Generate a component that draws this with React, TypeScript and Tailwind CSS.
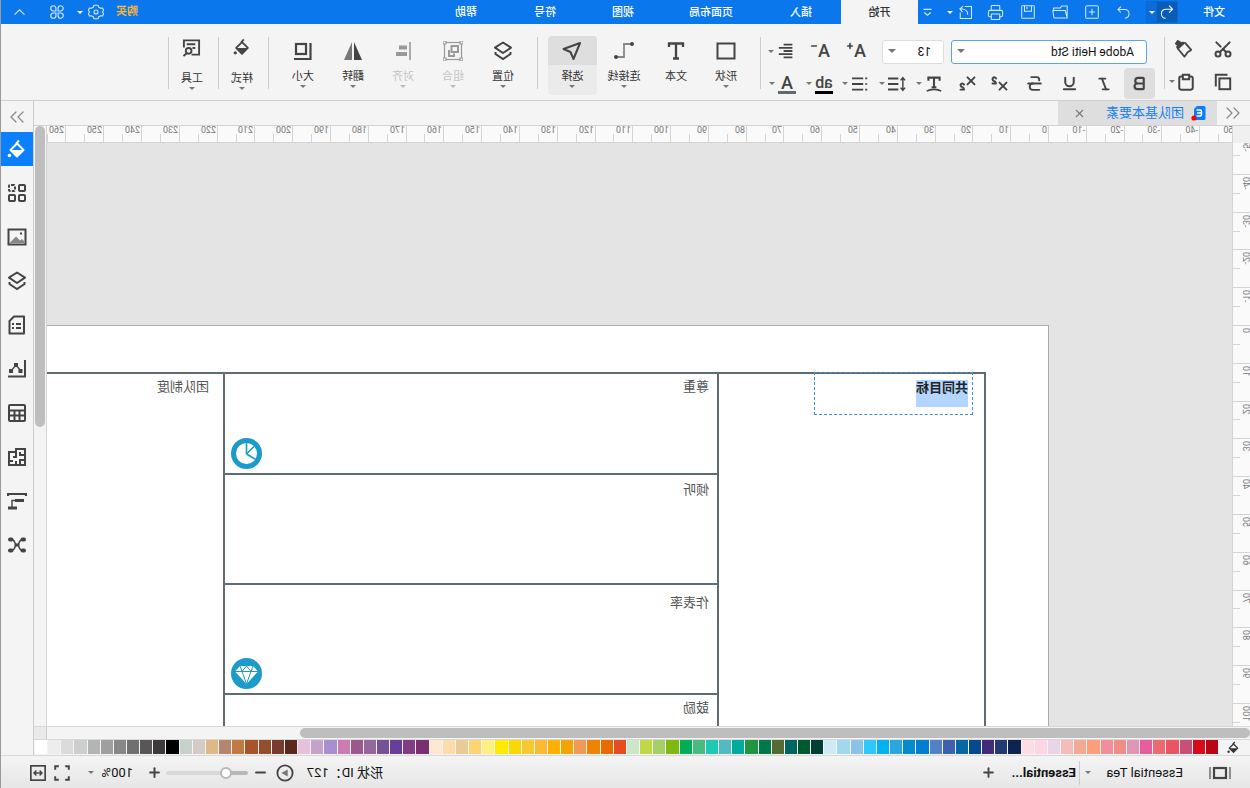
import { useState } from 'react';
import type { ReactNode } from 'react';
import { Bold, Italic, Underline, Strikethrough, Superscript, Subscript, Scissors, ChevronsLeft, ChevronsRight, X, Plus, Minus, Printer } from 'lucide-react';

const MENUS = [
  { label: '插入', width: 'w-20' },
  { label: '页面布局', width: 'w-[100px]' },
  { label: '视图', width: 'w-[76px]' },
  { label: '符号', width: 'w-20' },
  { label: '帮助', width: 'w-[78px]' },
];

const SWATCHES = [
  '#b70716', '#d80a1c', '#c85078', '#ea5562', '#ee6a72', '#e75e9e', '#e296b4', '#ee8e86', '#f08e9c', '#ff9e7a',
  '#f2aa92', '#f5bcbb', '#ead5e8', '#fdd5e5', '#fddde2', '#0f2350', '#223a70', '#422b78', '#074891', '#0468a6',
  '#3d61ae', '#5582c6', '#007ecf', '#008cce', '#2ca6df', '#00b2ef', '#2ec8fa', '#8bc2ea', '#a0d9ef', '#cdebf4',
  '#004032', '#005a30', '#006460', '#556b2f', '#007a48', '#1e9641', '#00ac9e', '#50bcc2', '#1ccab4', '#48bb80',
  '#00ae54', '#7fb80e', '#a5d065', '#bfd843', '#cce6c7', '#e54d20', '#eb6a00', '#f08300', '#f19a58', '#f2a500',
  '#ffb000', '#fdb933', '#f8c930', '#ffd700', '#ffea00', '#fcf080', '#fdd374', '#e9cb98', '#fddbab', '#fde8d0',
  '#7a2f70', '#813c85', '#673e98', '#755298', '#94689f', '#9d578b', '#cc7cb0', '#a890d0', '#c5a3c8', '#e9c0dc',
  '#5a281c', '#783b30', '#934e2c', '#a85428', '#c27a40', '#b4866e', '#deb887', '#d4cac6', '#c8d2ca', '#000000',
  '#3f3a3a', '#585656', '#707070', '#868786', '#9e9f9e', '#b3b5b4', '#cdcfce', '#dbdbdb', '#ededed', '#ffffff',
];

// 96 dpi, ruler in millimetres
const PX_PER_MM = 3.779;

type IconProps = { size?: number; stroke?: number; className?: string; children: ReactNode };

function Icon({ size = 20, stroke = 2, className = '', children }: IconProps) {
  return (
    <svg width={size} height={size} viewBox="0 0 20 20" fill="none" stroke="currentColor" strokeWidth={stroke} className={`shrink-0 ${className}`} aria-hidden="true">
      {children}
    </svg>
  );
}

function Caret({ className = 'text-[#777]', size = 6 }: { className?: string; size?: number }) {
  return (
    <svg width={size} height={size / 2} viewBox="0 0 6 3" className={`shrink-0 ${className}`} aria-hidden="true">
      <path d="M0 0h6L3 3z" fill="currentColor" />
    </svg>
  );
}

function Bucket({ size = 20 }: { size?: number }) {
  return (
    <Icon size={size}>
      <path d="M8 1.500l3 3.500" strokeWidth="2" />
      <path d="M10 4.500l6.500 6.500L10 17.500 3.500 11z" strokeLinejoin="round" />
      <path d="M4 11h12l-6 6z" fill="currentColor" stroke="none" />
      <circle cx="17.500" cy="16.500" r="1.800" fill="currentColor" stroke="none" />
    </Icon>
  );
}

function Layers({ size = 20 }: { size?: number }) {
  return (
    <Icon size={size}>
      <path d="M10 1.500l8 5.200-8 5.300-8-5.300z" strokeLinejoin="round" />
      <path d="M2.500 11v2l7.500 5 7.500-5v-2" />
    </Icon>
  );
}

function Divider() {
  return <div className="mt-[13px] h-[52px] w-px shrink-0 bg-[#ccc]" />;
}

function TitleButton({ label, width, children }: { label: string; width: string; children: ReactNode }) {
  return (
    <button aria-label={label} className={`flex h-full shrink-0 items-center justify-center text-[#d5e8fd] ${width}`}>
      {children}
    </button>
  );
}

function TitleBar() {
  return (
    <header className="flex h-6 shrink-0 items-center bg-[#0a78ec] text-[11px] font-medium text-white">
      <button className="h-full w-[72px] pt-0.5">文件</button>
      <div className="flex h-[22px] items-center border border-[#0a68ce] bg-[#0a6cd8]">
        <button aria-label="撤销" className="flex h-full w-5 items-center justify-center bg-[#085db8]">
          <Icon size={14} stroke={1.500}>
            <path d="M7 1L2 6l5 5M2 6h9c4 0 7 2.500 7 6.500S15 19 12 19" />
          </Icon>
        </button>
        <button aria-label="撤销列表" className="flex h-full w-2.5 items-center justify-center">
          <Caret className="text-white" />
        </button>
      </div>
      <div className="ml-1.5 flex h-full items-center">
        <TitleButton label="重做" width="w-8">
          <Icon size={13} stroke={1.600}>
            <path d="M6 1L1.500 5.500 6 10" className="hidden" />
            <path d="M14 1l4.500 4.500L14 10M18 5.500H8c-4 0-6.500 2.500-6.500 6.500S4 18.500 8 18.500" />
          </Icon>
        </TitleButton>
        <TitleButton label="新建" width="w-8">
          <Icon size={14} stroke={1.500}>
            <rect x="1" y="1" width="18" height="18" rx="2" />
            <path d="M10 5.500v9M5.500 10h9" />
          </Icon>
        </TitleButton>
        <TitleButton label="打开" width="w-8">
          <Icon size={16} stroke={1.300}>
            <path d="M1 17V2.500h7l1.500 2.500H18v3M1 17.500L3.500 8H19l-1.500 9.500z" strokeLinejoin="round" />
          </Icon>
        </TitleButton>
        <TitleButton label="保存" width="w-8">
          <Icon size={14} stroke={1.500}>
            <rect x="1" y="1" width="18" height="18" rx="1" />
            <path d="M5 1v8h10V1M11.500 3v3" />
          </Icon>
        </TitleButton>
        <TitleButton label="打印" width="w-8">
          <Printer size={17} strokeWidth={1.500} />
        </TitleButton>
        <TitleButton label="导出" width="w-7">
          <Icon size={15} stroke={1.400}>
            <path d="M11 2H2v16h15V10" />
            <path d="M7 13c0-5 4-8 10-8M13 1.500L17.500 5 14 9.500" />
          </Icon>
        </TitleButton>
        <TitleButton label="导出选项" width="w-1">
          <Caret className="text-white" />
        </TitleButton>
        <TitleButton label="更多" width="w-[30px]">
          <span className="pl-2.5">
            <Icon size={9} stroke={2.500}>
              <path d="M1 3h18M3 10l7 6 7-6" />
            </Icon>
          </span>
        </TitleButton>
      </div>
      <nav className="flex h-full">
        <button className="w-[77px] bg-[#f4f4f4] pt-0.5 text-[#333]">开始</button>
        {MENUS.map((menu) => (
          <button key={menu.label} className={`pt-0.5 ${menu.width}`}>{menu.label}</button>
        ))}
      </nav>
      <div className="ml-auto flex h-full items-center">
        <button className="w-10 font-bold text-[#ffb52e]">购买</button>
        <TitleButton label="设置" width="w-[22px]">
          <Icon size={16} stroke={1.400}>
            <circle cx="10" cy="10" r="2.500" />
            <path d="M7.500 1.500h5l.8 2.600 2.700 1.300 2.200-.4 1.300 3-1.500 2 1.500 2-1.300 3-2.200-.4-2.700 1.300-.8 2.600h-5l-.8-2.600L4 14.600l-2.200.4-1.300-3 1.500-2-1.500-2 1.300-3 2.200.4 2.700-1.300z" strokeLinejoin="round" />
          </Icon>
        </TitleButton>
        <TitleButton label="设置选项" width="w-2.5">
          <Caret className="text-white" />
        </TitleButton>
        <TitleButton label="应用" width="w-9">
          <Icon size={14} stroke={1.600}>
            <path d="M8.500 8.500H4.800a3.700 3.700 0 1 1 3.700-3.700zM11.500 8.500V4.800a3.700 3.700 0 1 1 3.700 3.700zM8.500 11.500v3.700a3.700 3.700 0 1 1-3.700-3.700zM11.500 11.500h3.700a3.700 3.700 0 1 1-3.700 3.700z" />
          </Icon>
        </TitleButton>
        <TitleButton label="收起功能区" width="w-[38px]">
          <Icon size={11} stroke={2}>
            <path d="M1 14l9-9 9 9" />
          </Icon>
        </TitleButton>
      </div>
    </header>
  );
}

function FormatButton({ label, width = 'w-[35px]', children }: { label: string; width?: string; children: ReactNode }) {
  return (
    <button aria-label={label} className={`flex h-full shrink-0 items-center justify-center ${width}`}>
      {children}
    </button>
  );
}

// icon with a drop-down arrow at its right
function SplitButton({ label, width = 'w-[37px]', children }: { label: string; width?: string; children: ReactNode }) {
  return (
    <button aria-label={label} className={`flex h-full shrink-0 items-center justify-end gap-0.5 ${width}`}>
      <span className="flex w-5 justify-center">{children}</span>
      <Caret />
    </button>
  );
}

type ToolProps = { label: string; active?: boolean; disabled?: boolean; caret?: boolean; raised?: boolean; width?: string; children: ReactNode };

function Tool({ label, active, disabled, caret = true, raised, width = 'w-[50px]', children }: ToolProps) {
  return (
    <button
      disabled={disabled}
      className={`mt-3 flex h-[59px] shrink-0 flex-col items-center rounded-sm ${width} ${raised ? 'pl-[3px]' : ''} ${active ? 'bg-[#ebebeb]' : ''} ${disabled ? 'text-[#c4c4c4]' : ''}`}
    >
      <span className={`flex w-full items-center justify-center rounded-t-sm ${raised ? 'h-[22px]' : 'h-[29px]'} ${active ? 'bg-[#dedede]' : ''} ${disabled ? 'text-[#999]' : 'text-[#444]'}`}>
        {children}
      </span>
      <span className={`h-[18px] text-[11px] leading-5 ${raised ? 'mt-[11px]' : 'mt-0.5'}`}>{label}</span>
      {caret && <Caret className={disabled ? 'text-[#bbb]' : 'text-[#777]'} />}
    </button>
  );
}

function Ribbon() {
  return (
    <section className="flex h-[77px] shrink-0 border-b border-[#d0d0d0] bg-[#f4f4f4] text-[#333]">
      <div className="flex w-[85px] shrink-0 flex-col gap-[5px] pt-[13px] pl-[7px] text-[#444]">
        <div className="flex h-6">
          <FormatButton label="剪切" width="w-10"><Scissors size={20} strokeWidth={2.400} className="-rotate-90" /></FormatButton>
          <FormatButton label="格式刷" width="w-[38px]">
            <Icon size={18}>
              <path d="M17 1l2 3-3 2.500L13.500 3z" fill="currentColor" />
              <path d="M4 9l9 8 4-8.500M8 6L2.500 11.500 6 14l3 4.500 5-1.500" strokeLinejoin="round" className="hidden" />
              <path d="M8.500 3.500L2 11l4 2.500 3.500 5L16.500 10" strokeLinejoin="round" />
              <path d="M7.500 2.500l9.500 8.500 2-3.500-7-5.500z" fill="currentColor" stroke="none" />
            </Icon>
          </FormatButton>
        </div>
        <div className="flex h-[31px]">
          <FormatButton label="复制" width="w-10">
            <Icon size={18} stroke={2.200}>
              <rect x="2" y="6" width="12" height="12" />
              <path d="M5 2h13v13" />
            </Icon>
          </FormatButton>
          <button aria-label="粘贴" className="flex w-[38px] items-center justify-between pr-1 pl-2">
            <Icon size={18} stroke={2.200}>
              <rect x="2.500" y="4" width="15" height="14.500" rx="2" />
              <path d="M6.500 2h7v5h-7z" fill="#f4f4f4" />
            </Icon>
            <Caret />
          </button>
        </div>
      </div>
      <Divider />

      <div className="flex w-[403px] shrink-0 flex-col gap-[5px] pt-[15px] text-[#444]">
        <div className="flex h-6 pl-[17px]">
          <div className="relative">
            <select aria-label="字体" className="h-6 w-[196px] appearance-none rounded-[3px] border border-[#5aa5ee] bg-white pl-3 text-[12px] text-[#111]">
              <option>Adobe Heiti Std</option>
            </select>
            <Caret size={8} className="pointer-events-none absolute top-[10px] right-1.5 text-[#777]" />
          </div>
          <div className="relative ml-[7px]">
            <select aria-label="字号" className="h-6 w-[62px] appearance-none rounded-[3px] border border-[#ddd] bg-white pl-3 text-[12px] text-[#111]">
              <option>13</option>
            </select>
            <Caret size={8} className="pointer-events-none absolute top-[10px] right-1.5 text-[#777]" />
          </div>
          <div className="ml-2 flex">
            <FormatButton label="增大字号" width="w-9">
              <span className="text-[18px] leading-6 font-medium">A</span>
              <Plus size={8} strokeWidth={5} className="mb-2.5" />
            </FormatButton>
            <FormatButton label="减小字号" width="w-9">
              <span className="text-[18px] leading-6 font-medium">A</span>
              <Minus size={8} strokeWidth={5} className="mb-2.5" />
            </FormatButton>
            <SplitButton label="对齐方式" width="w-[34px]">
              <Icon size={16} stroke={2.200}>
                <path d="M2 2h11M2 6h17M2 10h11M2 14h17M2 18h11" />
              </Icon>
            </SplitButton>
          </div>
        </div>
        <div className="flex h-[31px] pl-[9px]">
          <button aria-label="加粗" aria-pressed="true" className="flex w-[31px] items-center justify-center rounded-sm bg-[#dedede]">
            <Bold size={17} strokeWidth={3} />
          </button>
          <div className="ml-0.5 flex">
            <FormatButton label="斜体"><Italic size={16} strokeWidth={2.800} /></FormatButton>
            <FormatButton label="下划线"><Underline size={17} strokeWidth={2.800} /></FormatButton>
            <FormatButton label="删除线"><Strikethrough size={19} strokeWidth={2.400} /></FormatButton>
            <FormatButton label="上标"><Superscript size={21} strokeWidth={2.200} /></FormatButton>
            <FormatButton label="下标" width="w-[29px]"><Subscript size={21} strokeWidth={2.200} /></FormatButton>
            <SplitButton label="文字效果">
              <Icon size={16} stroke={2.600}>
                <path d="M3 6V2h14v4M10 2v12M7 14h6" />
                <path d="M1 19c4-3 14-3 18 0" strokeWidth="2" />
              </Icon>
            </SplitButton>
            <SplitButton label="行距">
              <Icon size={18}>
                <path d="M3.500 3v14M1 6l2.500-3L6 6M1 14l2.500 3L6 14" strokeWidth="1.600" />
                <path d="M8.500 4H20M8.500 10H20M8.500 16H20" strokeWidth="2.200" />
              </Icon>
            </SplitButton>
            <SplitButton label="项目符号">
              <Icon size={16}>
                <path d="M1 3h2.500M1 10h2.500M1 17h2.500" />
                <path d="M6 3h14M6 10h14M6 17h14" strokeWidth="2.400" />
              </Icon>
            </SplitButton>
            <SplitButton label="突出显示" width="w-9">
              <span className="w-[18px] border-b-[3px] border-black text-center text-[16px] leading-[17px] font-medium">ab</span>
            </SplitButton>
            <SplitButton label="字体颜色">
              <span className="w-[18px] border-b-[3px] border-[#5f6b70] text-center text-[18px] leading-[17px] font-medium">A</span>
            </SplitButton>
          </div>
        </div>
      </div>
      <Divider />

      <div className="flex pr-2.5 pl-[9px]">
        <Tool label="形状"><Icon><rect x="1.500" y="2.500" width="17" height="15" /></Icon></Tool>
        <Tool label="文本" caret={false}><Icon stroke={2.300}><path d="M3 6V2.500h14V6M10 2.500v15M7 17.500h6" /></Icon></Tool>
        <Tool label="连接线" width="w-[54px]">
          <Icon stroke={1.800}>
            <path d="M3 3h7v13h7" className="text-[#888]" stroke="currentColor" />
            <circle cx="2" cy="3" r="2" fill="currentColor" stroke="none" />
            <circle cx="18" cy="16" r="2" fill="currentColor" stroke="none" />
          </Icon>
        </Tool>
        <Tool label="选择" active width="w-[49px]">
          <Icon><path d="M2 2l16.500 6-7 3L8.500 18z" strokeLinejoin="round" /></Icon>
        </Tool>
      </div>
      <Divider />

      <div className="flex px-[9px]">
        <Tool label="位置"><Layers /></Tool>
        <Tool label="组合" disabled>
          <Icon stroke={1.200}>
            <rect x="1.500" y="1.500" width="17" height="17" />
            <path d="M0 0h3v3H0zM17 0h3v3h-3zM0 17h3v3H0zM17 17h3v3h-3z" fill="#f4f4f4" />
            <rect x="5" y="5" width="6.500" height="6" strokeWidth="2" />
            <path d="M14 9v6H9v-2.500" strokeWidth="2" />
          </Icon>
        </Tool>
        <Tool label="对齐" disabled>
          <Icon>
            <path d="M3 1v18" strokeWidth="1.600" />
            <path d="M6 6.500h8M6 13h11" strokeWidth="4" />
          </Icon>
        </Tool>
        <Tool label="翻转">
          <Icon stroke={0}>
            <path d="M9 1v18H1z" fill="currentColor" />
            <path d="M11 1v18h8z" fill="#777" />
          </Icon>
        </Tool>
        <Tool label="大小">
          <Icon stroke={2.200}>
            <rect x="7" y="3" width="10" height="10" />
            <path d="M2.500 2v16H19" />
          </Icon>
        </Tool>
      </div>
      <Divider />
      <Tool label="样式" raised width="w-[49px]"><Bucket size={18} /></Tool>
      <Divider />
      <Tool label="工具" raised width="w-[49px]">
        <Icon size={19}>
          <path d="M10 17.500H2v-15h16V10M6 6.500h9M6 10.500h3" />
          <circle cx="13" cy="13.500" r="3" />
          <path d="M15 16l3.500 3" />
        </Icon>
      </Tool>
      <Divider />
    </section>
  );
}

function DocumentTabs() {
  return (
    <div className="flex h-[25px] shrink-0 border-b border-[#d4d4d4] bg-[#f4f4f4]">
      <button aria-label="展开面板" className="flex w-[33px] items-center justify-center text-[#888]">
        <ChevronsLeft size={24} strokeWidth={1.200} />
      </button>
      <div className="flex w-[159px] items-center bg-[#dedede] pl-[11px] text-[13px] text-[#1580f5]">
        <svg width="15" height="16" viewBox="0 0 15 16" aria-hidden="true">
          <path d="M2 1h7l3 3v11H2a1.500 1.500 0 0 1-1.500-1.500v-11A1.500 1.500 0 0 1 2 1z" fill="#0a7cff" />
          <path d="M9.500 5H6a1.500 1.500 0 0 0-1.500 1.500v3A1.500 1.500 0 0 0 6 11h3.500M5 8h4" fill="none" stroke="#fff" strokeWidth="1.500" />
          <circle cx="12" cy="13" r="2.600" fill="#f00" />
        </svg>
        <a href="#doc" className="ml-[7px]">团队基本要素</a>
        <button aria-label="关闭" className="ml-5 text-[#777]"><X size={13} strokeWidth={2} /></button>
      </div>
    </div>
  );
}

function range(from: number, to: number, step: number) {
  return Array.from({ length: (to - from) / step + 1 }, (_, i) => from + i * step);
}

// last half-step tick that fits in the given length
function lastTick(length: number) {
  return Math.floor(length / (PX_PER_MM * 10)) * 10 + 5;
}

function HorizontalRuler() {
  return (
    <div className="relative h-[17px] flex-1 overflow-hidden border-b border-[#d4d4d4] bg-[#fafafa] text-[9px] leading-[9px] text-[#777]">
      {range(-50, lastTick(window.innerWidth - 249), 5).map((mm) => (
        <div
          key={mm}
          className={`absolute bottom-0 border-l border-[#d4d4d4] pl-px ${mm % 10 ? 'h-2' : 'h-full'}`}
          style={{ left: Math.round(183 + mm * PX_PER_MM) }}
        >
          {mm % 10 === 0 && mm}
        </div>
      ))}
    </div>
  );
}

function VerticalRuler() {
  return (
    <div className="relative w-[18px] shrink-0 overflow-hidden border-r border-[#d4d4d4] bg-[#fafafa] text-[9px] leading-[9px] text-[#777]">
      {range(-50, lastTick(window.innerHeight - 387), 5).map((mm) => (
        <div
          key={mm}
          className={`absolute right-0 border-t border-[#d4d4d4] pt-0.5 ${mm % 10 ? 'w-[7px]' : 'w-full'}`}
          style={{ top: Math.round(182 + mm * PX_PER_MM) }}
        >
          {mm % 10 === 0 && <span className="block w-2.5 rotate-180 [writing-mode:vertical-rl]">{mm}</span>}
        </div>
      ))}
    </div>
  );
}

function ClockBadge() {
  return (
    <svg width="31" height="31" viewBox="0 0 31 31" aria-hidden="true">
      <circle cx="15.500" cy="15.500" r="15.500" fill="#1a9bcb" />
      <circle cx="15.500" cy="15.500" r="10.500" fill="#fff" />
      <path d="M15.500 4v12M15.500 16L7 21M15.500 16L8 8.500" stroke="#1a9bcb" strokeWidth="1.600" />
    </svg>
  );
}

function DiamondBadge() {
  return (
    <svg width="31" height="31" viewBox="0 0 31 31" aria-hidden="true">
      <circle cx="15.500" cy="15.500" r="15.500" fill="#1a9bcb" />
      <path d="M9 8h13l5 5.500L15.500 26 4 13.500z" fill="#fff" />
      <path d="M4 13.500h23M9 8l2 5.500L15.500 26 20 13.500 22 8M11 13.500L15.500 8l4.500 5.500" stroke="#1a9bcb" fill="none" />
    </svg>
  );
}

function Canvas() {
  return (
    <div className="relative min-w-0 flex-1 overflow-hidden bg-[#e4e4e4]">
      <div className="absolute top-[182px] right-0 bottom-0 left-[183px] overflow-hidden border-t border-l border-[#aaa] bg-white">
        <div className="mt-[46px] ml-[62px] flex h-full text-[13px] leading-5 text-[#555]">
          <div className="relative w-[267px] shrink-0 border-t-2 border-l-2 border-[#5f6d72]">
            <div className="absolute -top-0.5 left-[11px] h-[43px] w-[159px] border border-dashed border-[#3f8fe4] pt-[7px] pl-1">
              <span className="block h-[27px] w-fit bg-[#b2d6ff] leading-[15px] font-bold text-[#222]">共同目标</span>
            </div>
          </div>
          <div className="w-[494px] shrink-0 border-l-2 border-[#5f6d72]">
            <div className="flex h-[101px] items-end justify-between border-t-2 border-[#5f6d72] pt-[3px] pr-1.5 pb-1 pl-2">
              <span className="self-start">尊重</span>
              <ClockBadge />
            </div>
            <div className="h-[110px] border-t-2 border-[#5f6d72] pt-[5px] pl-2">倾听</div>
            <div className="flex h-[110px] items-end justify-between border-t-2 border-[#5f6d72] pt-2 pr-1.5 pb-1 pl-2">
              <span className="self-start">作表率</span>
              <DiamondBadge />
            </div>
            <div className="h-[110px] border-t-2 border-[#5f6d72] pt-[3px] pl-2">鼓励</div>
          </div>
          <div className="flex-1 border-t-2 border-l-2 border-[#5f6d72] pt-[3px] pl-3.5">团队制度</div>
        </div>
      </div>
    </div>
  );
}

function Palette() {
  return (
    <div className="flex h-[15px] shrink-0 bg-[#f4f4f4] pr-px">
      <button aria-label="填充颜色" className="flex w-8 shrink-0 items-center justify-center text-[#333]"><Bucket size={13} /></button>
      <div className="flex h-3.5 flex-1 gap-px">
        {SWATCHES.map((color) => (
          <button key={color} aria-label={color} className="flex-1" style={{ backgroundColor: color }} />
        ))}
      </div>
    </div>
  );
}

function Sidebar() {
  const items: { label: string; icon: ReactNode }[] = [
    { label: '主题', icon: <Bucket /> },
    {
      label: '符号库',
      icon: (
        <Icon>
          <rect x="2" y="2" width="6" height="6" rx="1" />
          <rect x="12" y="2" width="6" height="6" rx="1" strokeDasharray="3 1.200" />
          <rect x="2" y="12" width="6" height="6" rx="1" />
          <rect x="12" y="12" width="6" height="6" rx="1" />
        </Icon>
      ),
    },
    {
      label: '图片',
      icon: (
        <Icon>
          <rect x="1.500" y="2.500" width="17" height="15" />
          <path d="M3 16v-2l2-2 2 1.500 4-4 6 6v.5z" fill="#888" stroke="none" />
          <path d="M5 6.500h2" />
        </Icon>
      ),
    },
    { label: '图层', icon: <Layers /> },
    {
      label: '页面',
      icon: (
        <Icon>
          <path d="M3 1.500h10L17.500 6v12.500H3z" strokeLinejoin="round" />
          <path d="M6 9h5M13 9h2M6 13h5M13 13h2" />
        </Icon>
      ),
    },
    {
      label: '图表',
      icon: (
        <Icon>
          <path d="M2 1v16.500h17" />
          <path d="M6 12l5-6 5 6" strokeWidth="1.300" />
          <path d="M9 4h4v4H9zM4.500 10h4v4h-4zM14 10h4v4h-4z" fill="currentColor" stroke="none" />
        </Icon>
      ),
    },
    {
      label: '表格',
      icon: (
        <Icon>
          <rect x="2" y="2" width="16" height="16" rx="1" />
          <path d="M2 7.500h16M2 12.500h16M7.500 7.500V18M12.500 7.500V18" />
        </Icon>
      ),
    },
    {
      label: '平面图',
      icon: (
        <Icon>
          <path d="M2 2h9v3h7v13H2z" />
          <path d="M2 8h5V5M2 13h5v5M11 5v5h3M11 18v-4M14 14h4" />
        </Icon>
      ),
    },
    {
      label: '甘特图',
      icon: (
        <Icon>
          <path d="M1 5V3h18v2" strokeWidth="2.200" />
          <path d="M3 9.500h9M10 17h9" strokeWidth="3" />
          <path d="M12 9.500h3V16" strokeWidth="1.400" />
        </Icon>
      ),
    },
    {
      label: '思维导图',
      icon: (
        <Icon>
          <path d="M4 4.500c5 0 3 5.500 6 5.500s1-5.500 6-5.500M4 15.500c5 0 3-5.500 6-5.500s1 5.500 6 5.500" strokeWidth="1.400" />
          <path d="M3 4.500h1.500M15.500 4.500H17M3 15.500h1.500M15.500 15.500H17" strokeWidth="4" strokeLinecap="round" />
          <path d="M7.500 10h5" strokeWidth="3" />
        </Icon>
      ),
    },
  ];

  return (
    <aside className="flex w-[33px] shrink-0 flex-col border-l border-[#ccc] bg-[#f4f4f4] text-[#444]">
      <button aria-label="收起面板" className="flex h-[31px] items-center justify-center text-[#888]">
        <ChevronsRight size={24} strokeWidth={1.300} />
      </button>
      <div className="flex flex-col gap-2.5">
        {items.map((item, i) => (
          <button key={item.label} aria-label={item.label} className={`flex h-[34px] items-center justify-center ${i === 0 ? 'bg-[#0a80ff] text-white' : ''}`}>
            {item.icon}
          </button>
        ))}
      </div>
    </aside>
  );
}

function StatusBar() {
  const [zoom, setZoom] = useState(23);
  return (
    <footer className="flex h-[33px] shrink-0 items-center border-t border-[#d8d8d8] bg-linear-to-b from-[#f4f4f4] to-[#e6e6e6] pt-px text-[13px] text-[#111]">
      <button aria-label="页面列表" className="flex w-[67px] pl-[19px] text-[#444]">
        <svg width="22" height="14" viewBox="0 0 22 14" fill="none" stroke="currentColor" aria-hidden="true">
          <rect x="5" y="2" width="12" height="10" strokeWidth="2.200" />
          <path d="M1 1v12M21 1v12" stroke="#777" strokeWidth="1.600" />
        </svg>
      </button>
      <button className="flex w-[98px] items-center justify-between">Essential Tea<Caret /></button>
      <div className="ml-[5px] h-6 w-px bg-[#ccc]" />
      <button className="ml-[3px] w-[70px] text-left font-bold">Essential...</button>
      <button aria-label="添加页面" className="ml-2.5 text-[#444]"><Plus size={15} strokeWidth={3} /></button>

      <div className="ml-auto flex items-center text-[#444]">
        <span className="w-[77px] whitespace-nowrap text-[#111]">形状 ID：127</span>
        <button aria-label="播放" className="ml-3">
          <Icon size={18}>
            <circle cx="10" cy="10" r="8.500" />
            <path d="M7 6l7 4-7 4z" fill="#777" stroke="none" />
          </Icon>
        </button>
        <button aria-label="缩小" className="ml-2"><Minus size={15} strokeWidth={3.500} /></button>
        <input
          type="range"
          aria-label="缩放"
          value={zoom}
          onChange={(e) => setZoom(Number(e.target.value))}
          className="ml-[5px] h-1 w-[82px] appearance-none rounded-full [&::-webkit-slider-thumb]:size-3 [&::-webkit-slider-thumb]:appearance-none [&::-webkit-slider-thumb]:rounded-full [&::-webkit-slider-thumb]:border-2 [&::-webkit-slider-thumb]:border-[#b8b8b8] [&::-webkit-slider-thumb]:bg-white"
          style={{ background: `linear-gradient(to right, #b8b8b8 ${zoom}%, #d8d8d8 ${zoom}%)` }}
        />
        <button aria-label="放大" className="ml-1"><Plus size={15} strokeWidth={3.200} /></button>
        <button className="ml-3.5 flex w-[45px] items-center justify-between text-[#111]">100%<Caret /></button>
        <button aria-label="全屏" className="ml-[18px]">
          <Icon size={16} stroke={2.400}><path d="M1.500 6V1.500H6M14 1.500h4.500V6M18.500 14v4.500H14M6 18.500H1.500V14" /></Icon>
        </button>
        <button aria-label="适应宽度" className="mr-[29px] ml-2">
          <Icon size={16}>
            <rect x="1" y="1" width="18" height="18" strokeWidth="2.200" />
            <path d="M5 10h10M8 7l-3 3 3 3M12 7l3 3-3 3" strokeWidth="1.800" />
          </Icon>
        </button>
      </div>
    </footer>
  );
}

export default function App() {
  return (
    <div className="flex h-screen -scale-x-100 flex-col overflow-hidden border-r border-[#999] bg-[#f4f4f4] font-[Roboto,'Noto_Sans_CJK_SC',sans-serif]">
      <TitleBar />
      <Ribbon />
      <div className="flex min-h-0 flex-1">
        <main className="flex min-w-0 flex-1 flex-col">
          <DocumentTabs />
          <div className="flex min-h-0 flex-1">
            <div className="flex min-w-0 flex-1 flex-col">
              <div className="flex">
                <div className="w-[18px] border-r border-[#d4d4d4] bg-[#f0f0f0]" />
                <HorizontalRuler />
              </div>
              <div className="flex min-h-0 flex-1">
                <VerticalRuler />
                <Canvas />
              </div>
            </div>
            <div className="w-[13px] shrink-0 border-l border-[#d4d4d4] px-px">
              <div className="h-[301px] rounded-full bg-[#bebebe]" />
            </div>
          </div>
          <div className="flex h-3.5 shrink-0 border-y border-[#d8d8d8]">
            <div className="flex-1 py-px">
              <div className="h-full w-[79%] rounded-full bg-[#bebebe]" />
            </div>
            <div className="w-[13px] border-l border-[#ccc] bg-[#eaeaea]" />
          </div>
          <Palette />
        </main>
        <Sidebar />
      </div>
      <StatusBar />
    </div>
  );
}
